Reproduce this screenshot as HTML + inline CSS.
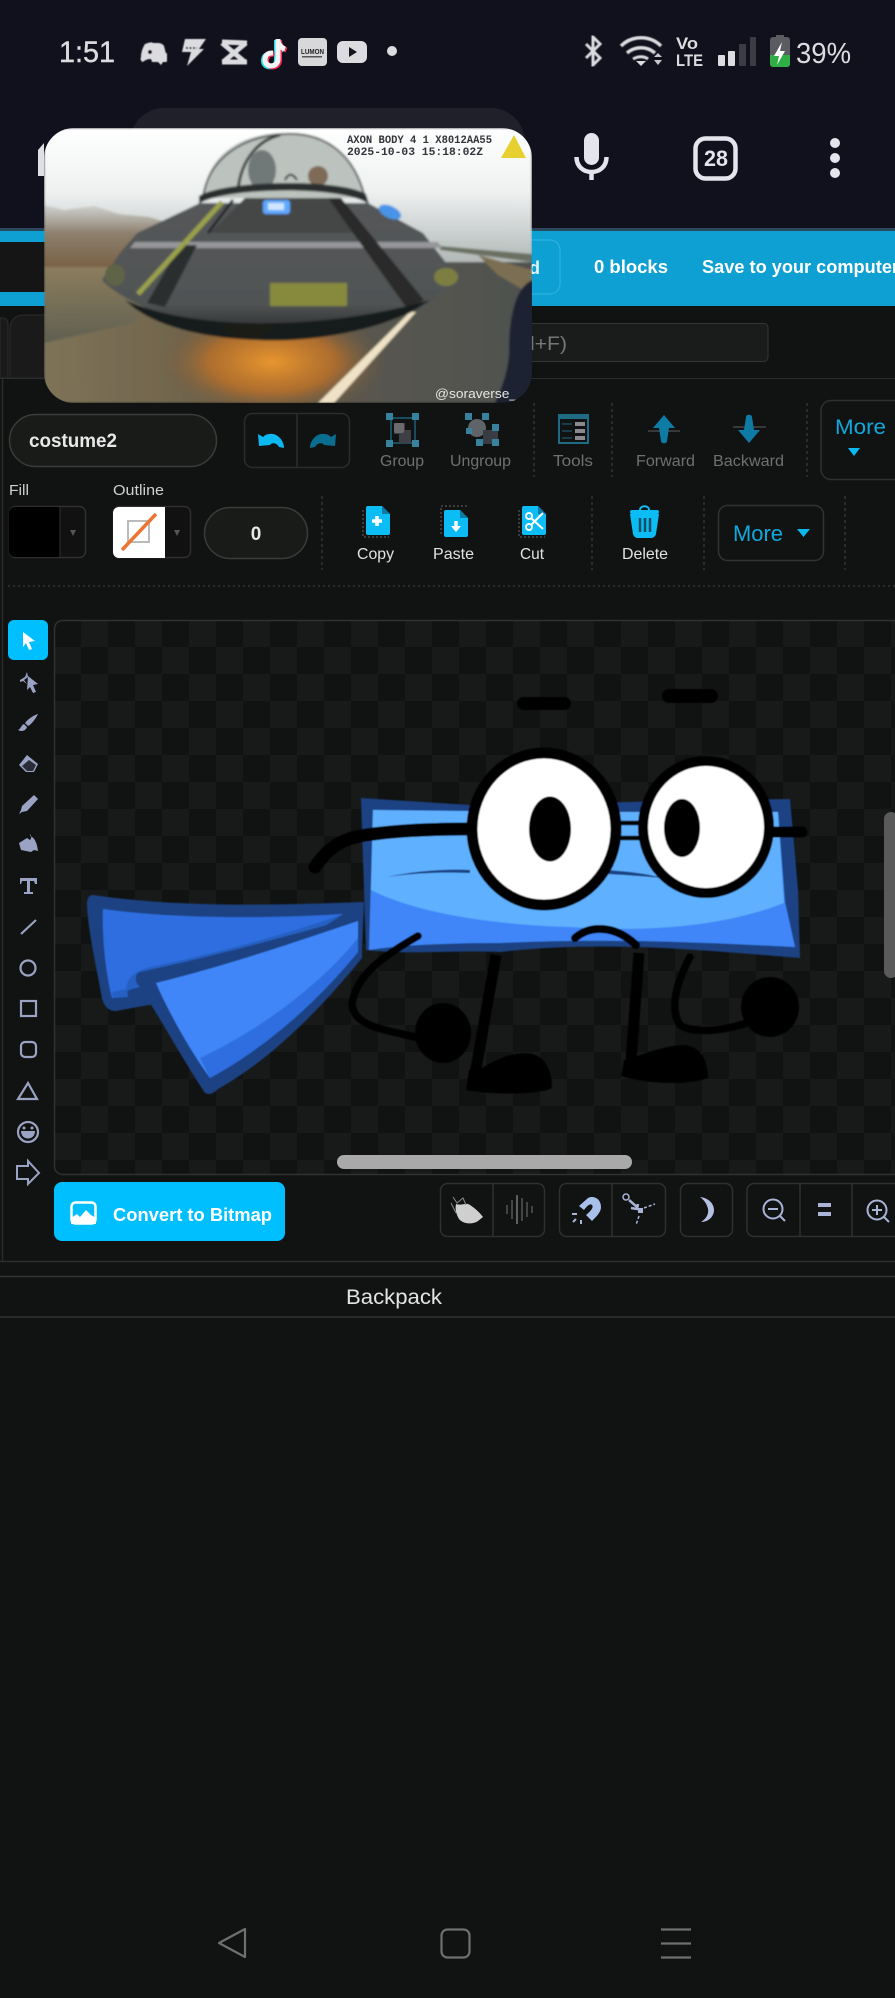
<!DOCTYPE html>
<html lang="en"><head><meta charset="utf-8"><title>Costume editor</title>
<style>
html,body{margin:0;padding:0;background:#111212;}
body{width:895px;height:1998px;overflow:hidden;position:relative;}
svg{position:absolute;left:0;top:0;display:block;}
text{font-family:"Liberation Sans",sans-serif;}
</style></head><body>
<svg xmlns="http://www.w3.org/2000/svg" width="895" height="1998" viewBox="0 0 895 1998">
<defs>
<pattern id="chk" x="54" y="620" width="54" height="54" patternUnits="userSpaceOnUse">
<rect width="54" height="54" fill="#111313"/><rect x="27" width="27" height="27" fill="#181a1a"/><rect y="27" width="27" height="27" fill="#181a1a"/>
</pattern>
<linearGradient id="sky" x1="0" y1="0" x2="0" y2="1"><stop offset="0" stop-color="#ffffff"/><stop offset=".45" stop-color="#eff1f1"/><stop offset=".8" stop-color="#c4cac9"/><stop offset="1" stop-color="#aeb4b2"/></linearGradient>
<linearGradient id="gnd" x1="0" y1="0" x2="1" y2="0"><stop offset="0" stop-color="#7e7358"/><stop offset=".4" stop-color="#6b5f48"/><stop offset=".7" stop-color="#57564f"/><stop offset="1" stop-color="#4f5150"/></linearGradient>
<linearGradient id="gnd2" x1="0" y1="0" x2="0" y2="1"><stop offset="0" stop-color="#8f7f5f" stop-opacity=".95"/><stop offset="1" stop-color="#5e5f50" stop-opacity=".95"/></linearGradient>
<linearGradient id="trees" x1="0" y1="0" x2="0" y2="1"><stop offset="0" stop-color="#9a9488" stop-opacity=".25"/><stop offset=".45" stop-color="#7f6d56" stop-opacity=".8"/><stop offset="1" stop-color="#7a6246"/></linearGradient>
<radialGradient id="glow"><stop offset="0" stop-color="#e8962e"/><stop offset=".55" stop-color="#b9702a" stop-opacity=".85"/><stop offset="1" stop-color="#6b5a42" stop-opacity="0"/></radialGradient>
<linearGradient id="sauc" x1="0" y1="0" x2="0" y2="1"><stop offset="0" stop-color="#55585a"/><stop offset=".75" stop-color="#505353"/><stop offset="1" stop-color="#262728"/></linearGradient>
<clipPath id="vid"><rect x="44" y="128" width="488" height="275" rx="30"/></clipPath>
<filter id="bl" x="-5%" y="-5%" width="110%" height="110%"><feGaussianBlur stdDeviation="1"/></filter>
<filter id="bl2" x="-5%" y="-5%" width="110%" height="110%"><feGaussianBlur stdDeviation=".45"/></filter>
</defs>

<rect width="895" height="1998" fill="#111212"/>
<!-- top bar -->
<rect width="895" height="229" fill="#10111c"/>
<rect x="130" y="108" width="395" height="120" rx="34" fill="#1f2029"/>
<path d="M38 150 L44 143 V176 H38Z" fill="#e0e0e4"/>

<!-- status -->
<text x="59" y="62" font-size="30" fill="#dcdce0" stroke="#dcdce0" stroke-width=".4" textLength="56" lengthAdjust="spacingAndGlyphs">1:51</text>
<g fill="#dcdce0" filter="url(#bl2)">
<path d="M145 44c5-2 7-2 8-1h5c2 0 5 1 6 3l2 8h-10v8h-4l-1-3c-3 0-6 1-8 3-2-1-3-2-2-5 0-5 2-10 4-13z"/>
<circle cx="150" cy="52" r="2" fill="#10111c"/>
<rect x="155" y="53" width="12" height="9" rx="1"/><path d="M158 62l3 3 2-3z"/>
<path d="M185 39h21l-7 10h5l-17 17 4-14h-9z"/>
<path d="M186 48h11" stroke="#10111c" stroke-width="2" stroke-dasharray="2 1.5"/>
<path d="M222 42l25 1M222 62h25M222 43l23 19M246 43l-23 19" fill="none" stroke="#dcdce0" stroke-width="5"/>
</g>
<g fill="none" stroke-width="5">
<path d="M278 39v20c0 9-13 9-13 1s7-7 8-7M278 41c1 5 4 7 7 8" stroke="#25e4e6" transform="translate(-1.5,1)"/>
<path d="M278 39v20c0 9-13 9-13 1s7-7 8-7M278 41c1 5 4 7 7 8" stroke="#fb2c55" transform="translate(1.5,1)"/>
<path d="M278 39v20c0 9-13 9-13 1s7-7 8-7M278 41c1 5 4 7 7 8" stroke="#f4f4f4"/>
</g>
<rect x="298" y="38" width="29" height="28" rx="4" fill="#d8d8da"/>
<text x="301" y="54" font-size="7.5" font-weight="700" fill="#222" textLength="23" lengthAdjust="spacingAndGlyphs">LUMON</text>
<rect x="302" y="56" width="20" height="1.5" fill="#555"/>
<rect x="337" y="41" width="30" height="22" rx="6" fill="#dcdce0"/>
<path d="M349 47v10l8-5z" fill="#16161c"/>
<circle cx="392" cy="51" r="5" fill="#dcdce0"/>

<g fill="none" stroke="#dcdce0" stroke-width="3" filter="url(#bl2)">
<path d="M586 44l14 14-7 7V37l7 7-14 14"/>
<path d="M621 46c11-11 29-11 40 0" stroke-width="3.5"/><path d="M627 53c8-7 20-7 28 0" stroke-width="3.5"/><path d="M633 59c5-3 11-3 15 0" stroke-width="3"/>
</g>
<path d="M636 61h10l-5 5z" fill="#dcdce0"/>
<path d="M654 57l4-4 4 4zM654 60h8l-4 5z" fill="#c8c8cc"/>
<text x="676" y="49" font-size="17" font-weight="700" fill="#dcdce0" textLength="22" lengthAdjust="spacingAndGlyphs">Vo</text>
<text x="676" y="66" font-size="17" font-weight="700" fill="#dcdce0" textLength="27" lengthAdjust="spacingAndGlyphs">LTE</text>
<rect x="718" y="55" width="7" height="11" rx="1" fill="#dcdce0"/><rect x="728" y="51" width="7" height="15" rx="1" fill="#dcdce0"/>
<rect x="739" y="44" width="7" height="22" rx="1" fill="#3c3d44"/><rect x="750" y="37" width="6" height="29" rx="1" fill="#3c3d44"/>
<rect x="770" y="37" width="20" height="30" rx="3" fill="#5b5c62"/><rect x="776" y="35" width="8" height="3" fill="#5b5c62"/>
<path d="M770 55h20v9a3 3 0 0 1-3 3h-14a3 3 0 0 1-3-3z" fill="#2fae46"/>
<path d="M782 42l-8 14h5l-2 9 8-14h-5z" fill="#fff"/>
<text x="796" y="63" font-size="29" fill="#dcdce0" textLength="55" lengthAdjust="spacingAndGlyphs">39%</text>

<rect x="584" y="133" width="15" height="32" rx="7.5" fill="#e4e4ec"/>
<path d="M576.500 157c0 20 30 20 30 0M591.500 170v10" fill="none" stroke="#e4e4ec" stroke-width="4.500"/>
<rect x="695.500" y="138.500" width="40" height="40" rx="10" fill="none" stroke="#e4e4ec" stroke-width="4.500"/>
<text x="704" y="166" font-size="22" font-weight="700" fill="#e4e4ec" textLength="24" lengthAdjust="spacingAndGlyphs">28</text>
<circle cx="835" cy="143" r="5" fill="#e4e4ec"/><circle cx="835" cy="158" r="5" fill="#e4e4ec"/><circle cx="835" cy="173" r="5" fill="#e4e4ec"/>

<!-- blue bar -->
<rect y="229" width="895" height="77" fill="#0ea0d3"/>
<rect y="228" width="895" height="3" fill="#2a4a5c"/>
<rect y="242" width="60" height="50" fill="#151515"/>
<path d="M500 240h50a10 10 0 0 1 10 10v34a10 10 0 0 1-10 10h-50z" fill="#0ea0d3" stroke="#35b4e0" stroke-width="1"/>
<text x="540" y="274" font-size="18" font-weight="700" fill="#dff5fd" text-anchor="end">Load</text>
<text x="594" y="273" font-size="18" font-weight="700" fill="#fff" textLength="74" lengthAdjust="spacingAndGlyphs">0 blocks</text>
<text x="702" y="273" font-size="18" font-weight="700" fill="#fff" textLength="197" lengthAdjust="spacingAndGlyphs">Save to your computer</text>

<!-- search & tabs -->
<rect x="400" y="323.500" width="368" height="38" rx="4" fill="#1a1c1c" stroke="#343636"/>
<text x="530" y="350" font-size="19" fill="#777" textLength="37" lengthAdjust="spacingAndGlyphs">l+F)</text>
<path d="M0 318h3c3 0 5 2 5 6v54H0z" fill="#1a1a1a" stroke="#2c2c2c"/>
<path d="M10 378v-50c0-8 6-13 14-13h60v63z" fill="#1a1a1a" stroke="#2c2c2c"/>
<path d="M0 378.500H895" stroke="#2c2c2c"/>

<!-- left pane edge -->
<path d="M2.500 379V1261" stroke="#2a2a2a" stroke-width="1.500"/>

<!-- row 1 -->
<rect x="9.500" y="414.500" width="207" height="52" rx="26" fill="#191b19" stroke="#3a3c3a" stroke-width="1.500"/>
<text x="29" y="447" font-size="19" font-weight="700" fill="#e8e8e8" textLength="88" lengthAdjust="spacingAndGlyphs">costume2</text>
<rect x="244.500" y="413.500" width="105" height="54" rx="8" fill="none" stroke="#2c2c2c" stroke-width="1.500"/><path d="M297 413v54" stroke="#2c2c2c" stroke-width="1.500"/>
<path d="M258 434l1 12 11-1c2-3 7-2 9 2l5 1c0-8-7-15-14-14-3 0-5 1-7 3z" fill="#0cb8f0"/>
<path d="M336 434l-1 12-11-1c-2-3-7-2-9 2l-5 1c0-8 7-15 14-14 3 0 5 1 7 3z" fill="#0b6d90"/>

<!-- Group -->
<g>
<rect x="391" y="418" width="24" height="25" fill="none" stroke="#1d5f78" stroke-width="1.500"/>
<g fill="#37829d"><rect x="386" y="413" width="7" height="7"/><rect x="412" y="413" width="7" height="7"/><rect x="386" y="440" width="7" height="7"/><rect x="412" y="440" width="7" height="7"/></g>
<path d="M394 423h11v7h6v13h-12v-9h-5z" fill="#3f4046"/><rect x="394" y="423" width="10" height="10" rx="2" fill="#6b6b6e"/>
</g>
<text x="380" y="466" font-size="16" fill="#707070" textLength="44" lengthAdjust="spacingAndGlyphs">Group</text>
<g>
<circle cx="477" cy="428" r="9" fill="#5e6468"/><rect x="483" y="430" width="15" height="14" fill="#3a3c44"/>
<g fill="#37829d"><rect x="465" y="413" width="7" height="7"/><rect x="482" y="413" width="7" height="7"/><rect x="466" y="428" width="6" height="6"/><rect x="492" y="424" width="7" height="7"/><rect x="476" y="439" width="7" height="7"/><rect x="492" y="439" width="7" height="7"/></g>
</g>
<text x="450" y="466" font-size="16" fill="#707070" textLength="61" lengthAdjust="spacingAndGlyphs">Ungroup</text>
<path d="M534 403V477M612 403V477M807 403V477" stroke="#333" stroke-width="1.500" stroke-dasharray="3 3"/>
<rect x="559" y="415" width="29" height="28" fill="none" stroke="#1f6a85" stroke-width="2"/><rect x="559" y="415" width="29" height="4" fill="#1f6a85"/>
<path d="M562 424h10M562 431h10M562 438h10" stroke="#1f6a85" stroke-width="1"/>
<g fill="#8a8a8e"><rect x="575" y="422" width="10" height="4"/><rect x="575" y="429" width="10" height="4"/><rect x="575" y="436" width="10" height="4"/></g>
<text x="553" y="466" font-size="16" fill="#707070" textLength="40" lengthAdjust="spacingAndGlyphs">Tools</text>
<path d="M648 431h32" stroke="#444" stroke-width="1.500"/>
<path d="M664 415l11 13h-6l-2 13c0 3-6 3-6 0l-2-13h-6z" fill="#0e7ba4"/>
<text x="636" y="466" font-size="16" fill="#707070" textLength="59" lengthAdjust="spacingAndGlyphs">Forward</text>
<path d="M733 427h33" stroke="#444" stroke-width="1.500"/>
<path d="M749 443l-11-13h6l2-13c0-3 6-3 6 0l2 13h6z" fill="#0e7ba4"/>
<text x="713" y="466" font-size="16" fill="#707070" textLength="71" lengthAdjust="spacingAndGlyphs">Backward</text>
<path d="M900 400.500H831a10 10 0 0 0-10 10v59a10 10 0 0 0 10 10h69" fill="none" stroke="#2f2f2f" stroke-width="1.500"/>
<text x="835" y="434" font-size="21" fill="#13a8dc" textLength="51" lengthAdjust="spacingAndGlyphs">More</text>
<path d="M848 448h12l-6 8z" fill="#0cb8f0"/>

<!-- row 2 -->
<text x="9" y="495" font-size="15" fill="#d0d0d0" textLength="20" lengthAdjust="spacingAndGlyphs">Fill</text>
<text x="113" y="495" font-size="15" fill="#d0d0d0" textLength="51" lengthAdjust="spacingAndGlyphs">Outline</text>
<rect x="9.500" y="506.500" width="76" height="51" rx="6" fill="#111" stroke="#2f2f2f" stroke-width="1.500"/>
<path d="M15 507h45v50H15a6 6 0 0 1-6-6v-38a6 6 0 0 1 6-6z" fill="#000"/><path d="M60 507v50" stroke="#2f2f2f"/>
<path d="M70 530h6l-3 6z" fill="#555"/>
<rect x="113.500" y="506.500" width="77" height="51" rx="6" fill="#111" stroke="#2f2f2f" stroke-width="1.500"/>
<path d="M119 507h46v51h-46a6 6 0 0 1-6-6v-39a6 6 0 0 1 6-6z" fill="#fff"/>
<rect x="128" y="521" width="21" height="21" fill="none" stroke="#bbb" stroke-width="2"/>
<path d="M122 550l34-36" stroke="#ec7430" stroke-width="3.500"/>
<path d="M174 530h6l-3 6z" fill="#555"/>
<rect x="204.500" y="507.500" width="103" height="51" rx="25.500" fill="#191b19" stroke="#3a3c3a" stroke-width="1.500"/>
<text x="256" y="540" font-size="19" font-weight="700" fill="#e8e8e8" text-anchor="middle">0</text>
<path d="M322 496V570M592 496V570M704 496V570M845 496V570" stroke="#333" stroke-width="1.500" stroke-dasharray="3 3"/>

<!-- copy/paste/cut -->
<path d="M363 510v27h26" fill="none" stroke="#4a4a4a" stroke-width="1.500" stroke-dasharray="2 2"/>
<path d="M368 506h14l8 8v19a2 2 0 0 1-2 2h-20a2 2 0 0 1-2-2v-25a2 2 0 0 1 2-2z" fill="#0cbcf4"/><path d="M382 506v8h8" fill="#0a7da5"/>
<path d="M377 516v10M372 521h10" stroke="#fff" stroke-width="3.500"/>
<text x="357" y="559" font-size="16" fill="#e2e2e2" textLength="37" lengthAdjust="spacingAndGlyphs">Copy</text>
<path d="M441 534v-28h26" fill="none" stroke="#4a4a4a" stroke-width="1.500" stroke-dasharray="2 2"/>
<path d="M446 510h14l8 8v17a2 2 0 0 1-2 2h-20a2 2 0 0 1-2-2v-23a2 2 0 0 1 2-2z" fill="#0cbcf4"/><path d="M460 510v8h8" fill="#0a7da5"/>
<path d="M456 521v7" stroke="#fff" stroke-width="3.500"/><path d="M451 526h10l-5 6z" fill="#fff"/>
<text x="433" y="559" font-size="16" fill="#e2e2e2" textLength="41" lengthAdjust="spacingAndGlyphs">Paste</text>
<path d="M519 510v27h26" fill="none" stroke="#4a4a4a" stroke-width="1.500" stroke-dasharray="2 2"/>
<path d="M524 506h14l8 8v19a2 2 0 0 1-2 2h-20a2 2 0 0 1-2-2v-25a2 2 0 0 1 2-2z" fill="#0cbcf4"/><path d="M538 506v8h8" fill="#0a7da5"/>
<g fill="none" stroke="#fff" stroke-width="2"><circle cx="529" cy="516" r="3"/><circle cx="529" cy="527" r="3"/><path d="M531 518l12 11M531 525l12-12"/></g>
<text x="520" y="559" font-size="16" fill="#e2e2e2" textLength="24" lengthAdjust="spacingAndGlyphs">Cut</text>
<path d="M630 514h29l-3 20a5 5 0 0 1-5 4h-13a5 5 0 0 1-5-4z" fill="#0cbcf4"/>
<rect x="630" y="510" width="29" height="4" rx="2" fill="#0cbcf4"/><path d="M640 510c0-5 9-5 9 0" fill="none" stroke="#0cbcf4" stroke-width="2"/>
<path d="M640 518v14M645 518v14M650 518v14" stroke="#0a4f68" stroke-width="2.500"/>
<text x="622" y="559" font-size="16" fill="#e2e2e2" textLength="46" lengthAdjust="spacingAndGlyphs">Delete</text>
<rect x="718.500" y="505.500" width="105" height="55" rx="9" fill="none" stroke="#333" stroke-width="1.500"/>
<text x="733" y="541" font-size="22" fill="#13a8dc" textLength="50" lengthAdjust="spacingAndGlyphs">More</text>
<path d="M797 529h13l-6.500 8z" fill="#0cb8f0"/>
<path d="M8 586H895" stroke="#333" stroke-width="1.500" stroke-dasharray="2 3"/>

<!-- canvas -->
<rect x="54.500" y="620.500" width="850" height="554" rx="8" fill="url(#chk)" stroke="#303232" stroke-width="1.500"/>

<!-- character -->
<g filter="url(#bl2)">
<!-- back cape -->
<path d="M93 895 C180 908 280 905 364 902 L362 950 C300 985 200 995 116 1011 C108 1011 104 1006 102 998 C96 965 88 930 87 905 C87 898 89 895 93 895Z" fill="#1d4283"/>
<path d="M103 909 C180 920 280 918 343 914 C300 942 220 965 128 990 L126 996 L112 998 C105 970 102 935 103 909Z" fill="#2e6ee0"/>
<path d="M343 914 C300 945 240 962 142 985 L127 991 L128 997 L113 998 L112 992 L126 989 C128 975 135 972 150 967 C230 950 300 930 343 914Z" fill="#2660c4"/>
<!-- front cape -->
<path d="M140 972 C220 955 310 930 362 915 L362 958 C320 1010 270 1060 218 1089 C212 1095 206 1096 203 1090 C180 1055 150 1000 136 982 C135 976 137 973 140 972Z" fill="#1d4283"/>
<path d="M156 983 C230 965 310 937 358 921 L358 952 C310 1005 260 1050 210 1078 C190 1050 170 1015 156 983Z" fill="#3f86f8"/>
<path d="M358 952 C315 1005 262 1050 210 1078 L200 1058 C260 1030 320 985 358 938Z" fill="#2e6ee0"/>
<!-- body -->
<path d="M361 798 L470 805 L790 799 L798 890 L800 958 C700 950 600 940 500 952 C450 950 410 955 366 950Z" fill="#1d4283"/>
<path d="M373 810 L560 812 L778 812 L785 902 L795 947 C700 942 600 938 500 943 C450 943 400 945 369 950Z" fill="#3f86f8"/>
<path d="M373 810 L560 812 L778 812 L784 903 C720 928 640 932 570 927 C500 925 420 915 371 890Z" fill="#5eb0ff"/>
<path d="M387 877 C420 870 450 869 470 870 L470 873 C440 872 415 873 387 877Z" fill="#1d4283"/>
<path d="M608 870 C630 872 645 873 662 878 C640 876 625 875 608 874Z" fill="#1d4283"/>
<!-- glasses arms -->
<path d="M315 867 C330 845 345 838 366 835 C400 830 440 829 468 829" fill="none" stroke="#000" stroke-width="13" stroke-linecap="round"/>
<path d="M770 832H802" fill="none" stroke="#000" stroke-width="11" stroke-linecap="round"/>
<path d="M610 823H640M610 838H640" stroke="#000" stroke-width="4.500"/>
<!-- eyes -->
<ellipse cx="544" cy="829" rx="72" ry="76" fill="#fff" stroke="#000" stroke-width="11"/>
<ellipse cx="550" cy="829" rx="21" ry="32.500" fill="#000"/>
<ellipse cx="706" cy="827" rx="63" ry="66" fill="#fff" stroke="#000" stroke-width="10"/>
<ellipse cx="682" cy="828" rx="18" ry="29" fill="#000"/>
<!-- brows -->
<rect x="517" y="697" width="54" height="13" rx="6.500" fill="#000"/>
<rect x="662" y="689" width="56" height="14" rx="7" fill="#000"/>
<!-- mouth -->
<path d="M575 938 C590 925 615 925 636 945" fill="none" stroke="#000" stroke-width="8" stroke-linecap="round"/>
<!-- arms -->
<path d="M418 936 C385 955 355 975 352 1005 C355 1030 395 1030 425 1040" fill="none" stroke="#000" stroke-width="7.500" stroke-linecap="round"/>
<ellipse cx="443" cy="1033" rx="28" ry="30" fill="#000"/>
<path d="M690 957 C675 985 670 1010 680 1025 C695 1035 730 1030 755 1020" fill="none" stroke="#000" stroke-width="7.500" stroke-linecap="round"/>
<ellipse cx="770" cy="1007" rx="29" ry="30" fill="#000"/>
<!-- legs -->
<path d="M496 955 L474 1080" stroke="#000" stroke-width="11"/>
<path d="M466 1090 L469 1070 L482 1068 C495 1060 510 1053 525 1053 C545 1053 552 1070 552 1088 C540 1095 490 1095 466 1090Z" fill="#000"/>
<path d="M639 953 L630 1075" stroke="#000" stroke-width="11"/>
<path d="M621 1076 L624 1060 L637 1056 C655 1050 670 1045 685 1045 C702 1047 708 1062 708 1078 C690 1085 650 1085 621 1076Z" fill="#000"/>
</g>

<!-- scrollbars -->
<rect x="337" y="1155" width="295" height="14" rx="7" fill="#a9a9a9"/>
<rect x="884" y="812" width="14" height="166" rx="7" fill="#5a5a5a"/>

<!-- tools -->
<rect x="8" y="620" width="40" height="40" rx="6" fill="#00bfff"/>
<path d="M23 632l12 9-6 1 3 7-3 1-3-7-3 4z" fill="#fff"/>
<g fill="#9aa3c4" stroke="none">
<path d="M28 676l10 8-5 1 3 7-3 1-3-6-3 3z"/><path d="M20 680l5-3 2-5 1 5-4 3 3 4-4-3-3 1z"/>
<path d="M38 714c-2 4-6 10-10 12l-3-3c3-4 9-8 13-9z"/><path d="M24 724l3 3c-1 4-6 5-9 3 3-1 3-5 6-6z"/>
<path d="M27 755l11 9-4 8H26l-7-7z"/><path d="M22 766l7-6 7 5-3 6h-6z" fill="#2a2c36"/>
<path d="M34 795l4 4-11 12-5 1-3 2 2-4 1-4z"/>
<path d="M30 836c4 1 7 6 8 15l-4-1-3 2-10-2-2-7 8-5 3 2c2-2 1-4 0-6z"/>
<path d="M20 878h17v6h-2l-1-3h-4v11h3v2h-9v-2h3v-11h-5l-1 3h-1z"/>
</g>
<g fill="none" stroke="#9aa3c4" stroke-width="2.200">
<path d="M21 934l15-14"/>
<circle cx="28" cy="968" r="7.500"/>
<rect x="21" y="1001" width="15" height="15"/>
<rect x="21" y="1042" width="15" height="15" rx="4"/>
<path d="M28 1083l9 16H18z"/>
<circle cx="28" cy="1132" r="10"/>
<path d="M17 1166h11v-5l11 12-11 11v-5H17z" stroke-width="2"/>
</g>
<path d="M21 1131h14c0 10-14 10-14 0z" fill="#9aa3c4"/>
<circle cx="24" cy="1128" r="1.500" fill="#9aa3c4"/><circle cx="32" cy="1128" r="1.500" fill="#9aa3c4"/>

<!-- convert -->
<rect x="54" y="1182" width="231" height="59" rx="8" fill="#00bfff"/>
<rect x="71.500" y="1202.500" width="24" height="21" rx="4" fill="none" stroke="#fff" stroke-width="2.500"/>
<path d="M71 1224v-6l6-4 3 3 6-7 5 5 5 3v6z" fill="#fff"/>
<text x="113" y="1221" font-size="18" font-weight="700" fill="#fff" textLength="159" lengthAdjust="spacingAndGlyphs">Convert to Bitmap</text>

<!-- bottom toolbar -->
<g fill="none" stroke="#2f2f2f" stroke-width="1.500">
<rect x="440.500" y="1183.500" width="104" height="53" rx="7"/><path d="M493 1184v52"/>
<rect x="559.500" y="1183.500" width="106" height="53" rx="7"/><path d="M612 1184v52"/>
<rect x="680.500" y="1183.500" width="52" height="53" rx="7"/>
<path d="M900 1183.500H754a7 7 0 0 0-7 7v39a7 7 0 0 0 7 7h146"/><path d="M800 1184v52M852 1184v52"/>
</g>
<path d="M456 1204 C462 1206 466 1202 470 1205 C476 1209 480 1213 483 1217 L478 1221 C474 1224 464 1225 459 1219 C456 1214 455 1209 456 1204Z" fill="#cfcfcf"/>
<path d="M453 1197l4 6 6-5 3 7M451 1203l5 10" fill="none" stroke="#888" stroke-width="1"/>
<path d="M507 1205v9M512 1200v19M522 1198v23M527 1202v15M532 1206v7" stroke="#777" stroke-width="1"/>
<path d="M517 1195v29" stroke="#aaa" stroke-width="1"/>
<path d="M579 1206l9-8c6-3 13 1 13 9 0 5-4 9-9 14l-6-6c5-4 8-8 6-10-2-2-5 1-8 5z" fill="#a9c0ea"/>
<path d="M572 1214l5 0M576 1219l-3 3M581 1220v4" stroke="#a9b4d6" stroke-width="2"/>
<circle cx="626" cy="1197" r="3" fill="none" stroke="#a9b4d6" stroke-width="1.500"/>
<path d="M629 1200l8 7M638 1204l-1 5-6-1" stroke="#a9b4d6" stroke-width="2.500" fill="none"/>
<rect x="638" y="1208" width="5" height="5" fill="#a9b4d6"/>
<path d="M644 1208l11-4M639 1216l-3 9" stroke="#a9b4d6" stroke-width="1.500" stroke-dasharray="3 2" fill="none"/>
<path d="M700 1197c9 1 14 7 14 13s-5 12-13 12c5-3 8-8 7-13-1-5-4-9-8-12z" fill="#b4c0e4"/>
<g fill="none" stroke="#a9b4d6" stroke-width="2"><circle cx="773" cy="1209" r="9.500"/><path d="M780 1216l5 5M768 1209h10" /><circle cx="877" cy="1210" r="9.500"/><path d="M884 1217l5 5M872 1210h10M877 1205v10"/></g>
<path d="M818 1205h13M818 1214h13" stroke="#a9b4d6" stroke-width="4"/>

<!-- backpack -->
<path d="M0 1261.500H895" stroke="#2e2e2e" stroke-width="1.500"/>
<path d="M0 1276.500H895M0 1317H895" stroke="#333" stroke-width="1.500"/>
<text x="346" y="1304" font-size="21" fill="#e4e4e4" textLength="96" lengthAdjust="spacingAndGlyphs">Backpack</text>

<!-- nav -->
<g fill="none" stroke="#6f6f6f" stroke-width="2.200" stroke-linejoin="round">
<path d="M219 1943l26-14v28z"/>
<rect x="441.500" y="1929.500" width="28" height="28" rx="6"/>
<path d="M661 1929.500h30M661 1943.500h30M661 1957.500h30"/>
</g>

<!-- video -->
<g clip-path="url(#vid)">
<g filter="url(#bl)">
<rect x="44" y="128" width="488" height="140" fill="url(#sky)"/>
<rect x="44" y="262" width="488" height="141" fill="url(#gnd)"/>
<path d="M44 263h120l-30 60-90 20z" fill="url(#gnd2)"/>
<path d="M44 205l20 5 30-4 25 8 30 3 20 6-10 44H44z" fill="url(#trees)"/>
<path d="M440 246l92 8v8l-92-12z" fill="#6b6f62"/>
<path d="M478 255l54 15v25l-34-20z" fill="#7c6e52"/>
<ellipse cx="272" cy="362" rx="115" ry="55" fill="url(#glow)"/>
<path d="M410 312l-92 91h16l82-91z" fill="#efe2c6"/>
<!-- dome -->
<path d="M203 198c4-45 40-65 82-65s72 22 80 65z" fill="#bcc2bd"/>
<path d="M203 198c5-40 40-62 82-64s70 22 80 64" fill="none" stroke="#54585a" stroke-width="2"/>
<path d="M238 190c3-30 20-50 42-55" fill="none" stroke="#3a3d3f" stroke-width="3"/>
<ellipse cx="262" cy="170" rx="14" ry="20" fill="#6f7878"/>
<circle cx="318" cy="176" r="10" fill="#7f6a58"/>
<path d="M285 180c4-8 8-6 12 0" fill="none" stroke="#222" stroke-width="2"/>
<!-- saucer -->
<path d="M102 280 L120 253 L137 233 L200 203 L368 203 L423 233 L457 277 C440 300 410 315 390 320 C340 338 300 338 257 338 C220 335 190 328 173 320 C145 308 115 295 102 280Z" fill="url(#sauc)"/>
<path d="M199 204C220 188 340 184 369 204L366 194C340 178 225 180 199 196Z" fill="#2b2d2e"/>
<path d="M210 233L245 198H328L360 233Z" fill="#444647"/>
<path d="M135 242H438L442 248H130Z" fill="#96979a"/>
<path d="M233 200L208 233" stroke="#26282a" stroke-width="3"/>
<path d="M180 245H197L165 307L147 303Z" fill="#2c2e2f"/>
<path d="M328 198H341L424 300L408 310Z" fill="#2a2b2c"/>
<path d="M222 202L138 294" stroke="#9aa04c" stroke-width="5"/>
<rect x="270" y="283" width="77" height="23" fill="#878a3e"/>
<ellipse cx="446" cy="277" rx="12" ry="9" fill="#7d7f42"/><ellipse cx="115" cy="275" rx="10" ry="11" fill="#5f6347"/>
<path d="M125 300C190 330 320 332 430 300C390 330 310 343 257 340C200 338 150 325 125 300Z" fill="#181a1b"/>
<path d="M218 325h58l-14 12h-28z" fill="#1c1a18"/>
<rect x="263" y="200" width="27" height="14" rx="3" fill="#60a8ff"/><rect x="268" y="203" width="16" height="7" fill="#cfe6ff"/>
<ellipse cx="390" cy="212" rx="12" ry="6" transform="rotate(25 390 212)" fill="#4a94e8"/>
<!-- person -->
<path d="M533 280c-15 5-24 30-24 70 0 15-4 30-14 53h38z" fill="#1c2430"/>
</g>
<path d="M501 158l13-23 12 23z" fill="#e8d030"/>
<text x="347" y="143" font-size="11" font-weight="700" style="font-family:'Liberation Mono',monospace" fill="#33353a" textLength="145" lengthAdjust="spacingAndGlyphs">AXON BODY 4 1 X8012AA55</text>
<text x="347" y="155" font-size="11" font-weight="700" style="font-family:'Liberation Mono',monospace" fill="#33353a" textLength="136" lengthAdjust="spacingAndGlyphs">2025-10-03 15:18:02Z</text>
<text x="435" y="398" font-size="13" fill="#e6e6e6" textLength="82" lengthAdjust="spacingAndGlyphs">@soraverse_</text>
</g>
</svg>
</body></html>
